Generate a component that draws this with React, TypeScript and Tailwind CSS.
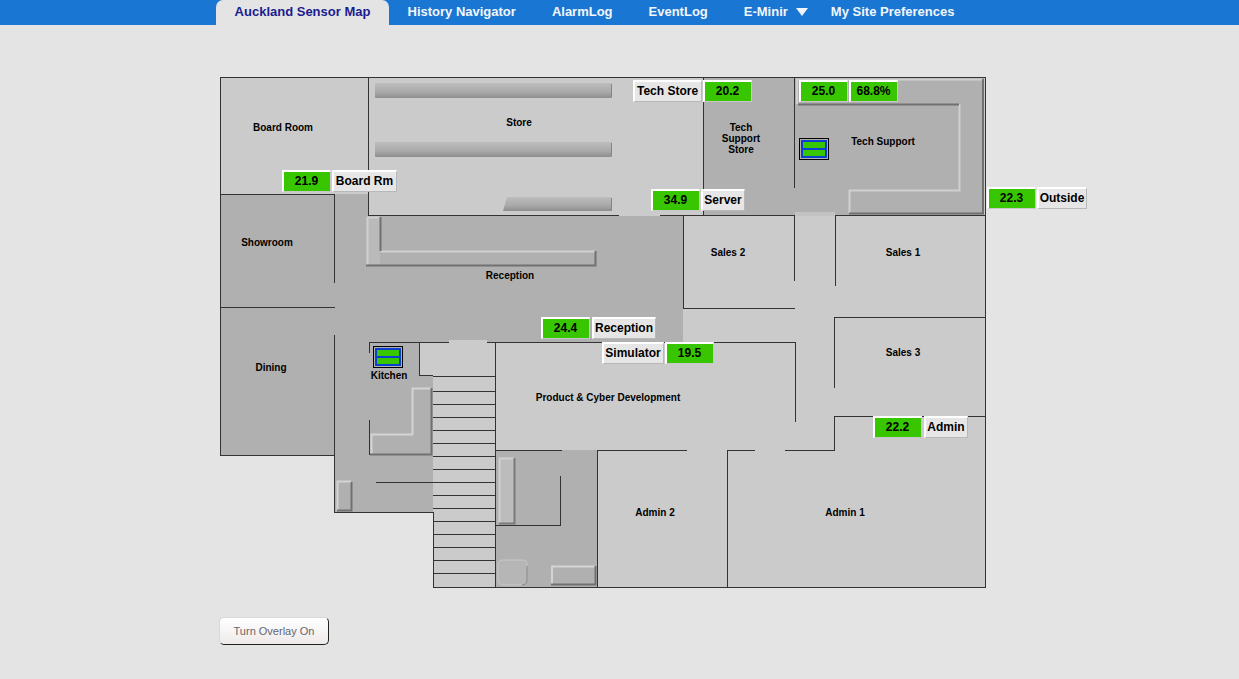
const walls = [
  "M220.5 77.5H985.5V587.5H433.5V512.5H334.5V455.5H220.5Z",
  "M368.5 78V215.5H619",
  "M660 215.5H683.5V308.5H795",
  "M683 215.5H794.5V281",
  "M703.5 78V215",
  "M794.5 78V188",
  "M835.5 286V215.5H985",
  "M221 194.5H334.5V283",
  "M221 307.5H335",
  "M334.5 335V512",
  "M369.5 353V342.5H449",
  "M487 342.5H795.5V422",
  "M419.5 342.5V375.5H433",
  "M369.5 420V455",
  "M376 482.5H433",
  "M495.5 342V587",
  "M496 450.5H562",
  "M597.5 450V587",
  "M597 450.5H687",
  "M728 450.5H755",
  "M785 450.5H834.5V416.5H985",
  "M834.5 388V317.5H985",
  "M727.5 450V587",
  "M560.5 476V525.5H496",
];

const stairs = [376, 391, 404, 417, 430, 443, 456, 469, 482, 495, 508, 521, 534, 547, 560, 573];

const rooms = [
  { name: "Board Room", pos: "left-[63px] top-[50px]" },
  { name: "Store", pos: "left-[299px] top-[45px]" },
  { name: "Tech", pos: "left-[521px] top-[50px]" },
  { name: "Support", pos: "left-[521px] top-[61px]" },
  { name: "Store", pos: "left-[521px] top-[72px]" },
  { name: "Tech Support", pos: "left-[663px] top-[64px]" },
  { name: "Showroom", pos: "left-[47px] top-[165px]" },
  { name: "Reception", pos: "left-[290px] top-[198px]" },
  { name: "Sales 2", pos: "left-[508px] top-[175px]" },
  { name: "Sales 1", pos: "left-[683px] top-[175px]" },
  { name: "Sales 3", pos: "left-[683px] top-[275px]" },
  { name: "Dining", pos: "left-[51px] top-[290px]" },
  { name: "Kitchen", pos: "left-[169px] top-[298px]" },
  { name: "Product & Cyber Development", pos: "left-[388px] top-[320px]" },
  { name: "Admin 2", pos: "left-[435px] top-[435px]" },
  { name: "Admin 1", pos: "left-[625px] top-[435px]" },
];

const Green = ({ text }: { text: string }) => (
  <div className="w-[49px] h-[22px] pr-[1px] pb-[1px] flex items-center justify-center bg-[#38c600] border-t-2 border-l-2 border-r border-b border-t-white border-l-white border-r-[#c8c8c8] border-b-[#c8c8c8] text-[12px] font-bold text-black">
    {text}
  </div>
);

const Label = ({ text, width }: { text: string; width: string }) => (
  <div className={`${width} h-[22px] pr-[1px] pb-[1px] flex items-center justify-center bg-[#e6e6e6] border-t-2 border-l-2 border-r border-b border-t-white border-l-white border-r-[#b8b8b8] border-b-[#b8b8b8] text-[12px] font-bold text-black whitespace-nowrap`}>
    {text}
  </div>
);

const SensorIcon = ({ pos }: { pos: string }) => (
  <div className={`absolute ${pos} w-[30px] h-[22px] border border-black bg-[#b0b0b0] p-[1px]`}>
    <div className="h-full flex flex-col gap-[2px] bg-[#0a3fd0] p-[2px]">
      <div className="flex-1 bg-[#38c600]" />
      <div className="flex-1 bg-[#38c600]" />
    </div>
  </div>
);

const FloorDrawing = () => (
  <svg className="absolute left-0 top-0" width="870" height="511" viewBox="220 77 870 511" fill="none">
    <defs>
      <linearGradient id="shelf" x1="0" y1="0" x2="0" y2="1">
        <stop offset="0" stopColor="#bdbdbd" />
        <stop offset="0.6" stopColor="#a9a9a9" />
        <stop offset="1" stopColor="#8d8d8d" />
      </linearGradient>
    </defs>
    <path d="M220 77H985V587H433V512H334V455H220Z" fill="#cbcbcb" />
    <path d="M221 194H368V215H683V342H419V375H433V512H334V455H221Z" fill="#b0b0b0" />
    <path d="M703 78H984V215H703Z" fill="#b0b0b0" />
    <path d="M496 450H598V587H496Z" fill="#b0b0b0" />
    <rect x="619" y="212" width="41" height="4" fill="#cbcbcb" />
    <rect x="795" y="212" width="40" height="4" fill="#c2c2c2" />
    <rect x="449" y="340" width="38" height="3" fill="#cbcbcb" />

    {/* shelves */}
    <rect x="375" y="83" width="237" height="15" rx="1" fill="url(#shelf)" />
    <rect x="375" y="142" width="237" height="15" rx="1" fill="url(#shelf)" />
    <path d="M507 197H612V211H503Z" fill="url(#shelf)" />
    <path d="M611.5 84V97M611.5 143V156M611.5 198V210" stroke="#858585" />

    {/* reception counter */}
    <rect x="368" y="218" width="12" height="46" fill="#bababa" />
    <path d="M367.5 265V217.5H380M380.5 251.5H595" stroke="#d0d0d0" strokeWidth="2" />
    <path d="M380.5 217V251M366 265.5H595.5V251" stroke="#707070" strokeWidth="2" />

    {/* tech support counter */}
    <path d="M797 104V79.5H982M849.5 213V190.5H959.5V104" stroke="#d0d0d0" strokeWidth="2" />
    <path d="M798 104.5H959M983 79V213.5H849" stroke="#707070" strokeWidth="2" />

    {/* kitchen */}
    <path d="M371.5 454V434.5H412.5V388.5H431" stroke="#d4d4d4" strokeWidth="2" />
    <path d="M431.5 388V454.5H370" stroke="#707070" strokeWidth="2" />
    <path d="M337.5 511V481.5H351" stroke="#d4d4d4" strokeWidth="2" />
    <path d="M351.5 482V510.5H337" stroke="#707070" strokeWidth="2" />

    {/* back room furniture */}
    <rect x="499" y="458" width="15" height="65" fill="#bcbcbc" />
    <path d="M499.5 523V458.5H514" stroke="#d0d0d0" strokeWidth="2" />
    <path d="M514.5 458V523.5H499" stroke="#7a7a7a" strokeWidth="2" />
    <path d="M552 584V566.5H595" stroke="#d4d4d4" strokeWidth="2" />
    <path d="M595.5 566V584.5H551" stroke="#707070" strokeWidth="2" />
    <path d="M503 560H523Q527 560 527 565V580Q527 585 522 585H503Q498 585 498 580V565Q498 560 503 560Z" fill="#b6b6b6" stroke="#c8c8c8" />
    <path d="M527 566V580Q527 585 522 585" stroke="#808080" />

    {/* stairs */}
    {stairs.map((y) => (
      <path key={y} d={`M433 ${y + 0.5}H496`} stroke="#333" />
    ))}

    {walls.map((d) => (
      <path key={d} d={d} stroke="#333" shapeRendering="crispEdges" />
    ))}
  </svg>
);

const FloorPlan = () => (
  <div className="relative w-[870px] h-[511px]">
    <FloorDrawing />

    {rooms.map((room, index) => (
      <div key={index} className={`absolute ${room.pos} -translate-x-1/2 -translate-y-1/2 text-[10px] leading-[11px] font-bold text-black whitespace-nowrap`}>
        {room.name}
      </div>
    ))}

    <SensorIcon pos="left-[579px] top-[61px]" />
    <SensorIcon pos="left-[153px] top-[269px]" />

    <div className="absolute left-[62px] top-[93px] flex gap-[1px]">
      <Green text="21.9" />
      <Label text="Board Rm" width="w-[65px]" />
    </div>
    <div className="absolute left-[413px] top-[3px] flex gap-[1px]">
      <Label text="Tech Store" width="w-[69px]" />
      <Green text="20.2" />
    </div>
    <div className="absolute left-[579px] top-[3px] flex gap-[1px]">
      <Green text="25.0" />
      <Green text="68.8%" />
    </div>
    <div className="absolute left-[431px] top-[112px] flex gap-[1px]">
      <Green text="34.9" />
      <Label text="Server" width="w-[44px]" />
    </div>
    <div className="absolute left-[767px] top-[110px] flex gap-[1px]">
      <Green text="22.3" />
      <Label text="Outside" width="w-[50px]" />
    </div>
    <div className="absolute left-[321px] top-[240px] flex gap-[2px]">
      <Green text="24.4" />
      <Label text="Reception" width="w-[64px]" />
    </div>
    <div className="absolute left-[382px] top-[265px] flex gap-[1px]">
      <Label text="Simulator" width="w-[62px]" />
      <Green text="19.5" />
    </div>
    <div className="absolute left-[653px] top-[339px] flex gap-[2px]">
      <Green text="22.2" />
      <Label text="Admin" width="w-[44px]" />
    </div>
  </div>
);

const App = () => {
  return (
    <div className="min-h-screen bg-[#e4e4e4] font-['Liberation_Sans',Arial,sans-serif]">
      <nav className="h-[25px] bg-[#1976d2] flex items-center pl-[216px] text-[13px] font-bold text-[#f2f6fb]">
        <div className="h-full w-[173px] pb-[1px] flex items-center justify-center bg-[#e4e4e4] rounded-t-[7px] text-[#1b1b8f]">
          Auckland Sensor Map
        </div>
        <div className="ml-[18.5px] pb-[1px] flex items-center gap-[36px]">
          <span>History Navigator</span>
          <span>AlarmLog</span>
          <span>EventLog</span>
          <span className="flex items-center gap-[8px]">
            E-Minir
            <svg width="12" height="8" viewBox="0 0 12 8">
              <path d="M0 0H12L6 8Z" fill="#f2f6fb" />
            </svg>
          </span>
          <span className="-ml-[13px]">My Site Preferences</span>
        </div>
      </nav>

      <main className="pl-[220px] pt-[52px]">
        <FloorPlan />
        <button className="block mt-[29px] -ml-[1px] w-[110px] h-[28px] pt-[1px] rounded-[5px] bg-gradient-to-b from-white to-[#efeaea] border border-[#d8d8d8] border-r-[#222] border-b-[#222] text-[11px] text-[#66666e]">
          Turn Overlay On
        </button>
      </main>
    </div>
  );
};

export default App;
